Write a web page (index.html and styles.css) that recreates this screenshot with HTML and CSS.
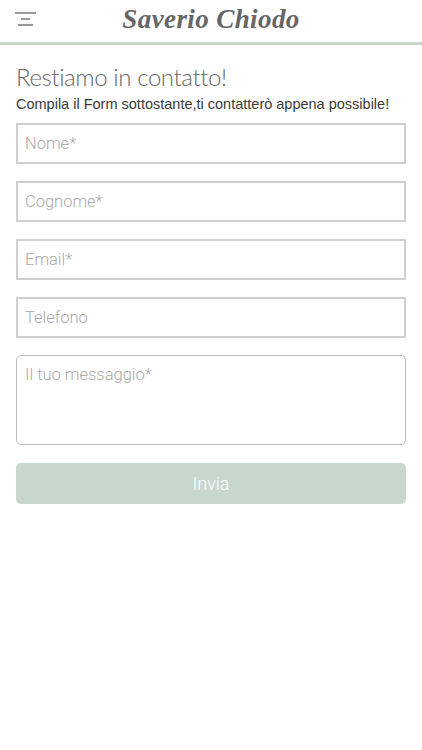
FILE: index.html
```html
<!DOCTYPE html>
<html lang="it">
<head>
  <meta charset="UTF-8" />
  <meta name="viewport" content="width=device-width, initial-scale=1.0"/>
  <title>Saverio Chiodo - Contatti</title>
  <link rel="stylesheet" href="styles.css">
</head>
<body>
  <header class="topbar">
    <button class="menu-btn" type="button" aria-label="Menu">
      <svg width="22" height="16" viewBox="0 0 22 16">
        <rect x="0" y="1" width="21" height="2" fill="#9a9a9a"/>
        <rect x="6" y="7" width="9" height="2" fill="#9a9a9a"/>
        <rect x="3" y="13" width="15" height="2" fill="#9a9a9a"/>
      </svg>
    </button>
    <div class="brand">Saverio Chiodo</div>
  </header>

  <main class="contatti">
    <h1>Restiamo in contatto!</h1>
    <p class="intro">Compila il Form sottostante,ti contatterò appena possibile!</p>

    <form id="contatto-form">
      <input type="text" name="nome" placeholder="Nome*" required />
      <input type="text" name="cognome" placeholder="Cognome*" required />
      <input type="email" name="email" placeholder="Email*" required />
      <input type="tel" name="telefono" placeholder="Telefono" />
      <textarea name="messaggio" placeholder="Il tuo messaggio*" required></textarea>
      <button type="submit" class="invia">Invia</button>
    </form>
  </main>
</body>
</html>
```

FILE: styles.css
```css
body {
  margin: 0;
  font-family: "Liberation Sans", Arial, sans-serif;
  background: #fff;
  color: #333;
}
.topbar {
  position: relative;
  height: 42px;
  border-bottom: 3px solid #c9d8cf;
  display: flex;
  align-items: center;
  justify-content: center;
}
.menu-btn {
  position: absolute;
  left: 15px;
  top: 11px;
  padding: 0;
  border: none;
  background: none;
  line-height: 0;
}
.brand {
  font-family: "Liberation Serif", "Times New Roman", serif;
  font-style: italic;
  font-weight: bold;
  font-size: 27px;
  letter-spacing: 0.4px;
  color: #666;
  margin-top: -3px;
}
.contatti {
  padding: 0 16px;
}
h1 {
  margin: 17px 0 0;
  font-family: Lato, sans-serif;
  font-weight: 300;
  font-size: 24px;
  letter-spacing: -0.4px;
  color: #666;
}
.intro {
  margin: 5px 0 0;
  font-size: 14.5px;
  color: #3a3a3a;
}
form {
  margin-top: 11px;
  display: flex;
  flex-direction: column;
  gap: 17px;
}
input, textarea {
  box-sizing: border-box;
  width: 100%;
  height: 41px;
  margin: 0;
  padding: 0 7px;
  border: 2px solid #cfcfcf;
  border-radius: 0;
  font-family: Roboto, "Liberation Sans", sans-serif;
  font-weight: 300;
  font-size: 16.5px;
  color: #555;
  outline: none;
}
textarea {
  height: 90px;
  padding: 9px 8px;
  border: 1px solid #bdbdbd;
  border-radius: 5px;
  resize: none;
}
input::placeholder, textarea::placeholder {
  color: #a9a9a9;
}
.invia {
  height: 41px;
  margin-top: 1px;
  border: none;
  border-radius: 5px;
  background: #c8d7ce;
  color: #fff;
  font-family: Roboto, "Liberation Sans", sans-serif;
  font-weight: 300;
  font-size: 18px;
}
```
